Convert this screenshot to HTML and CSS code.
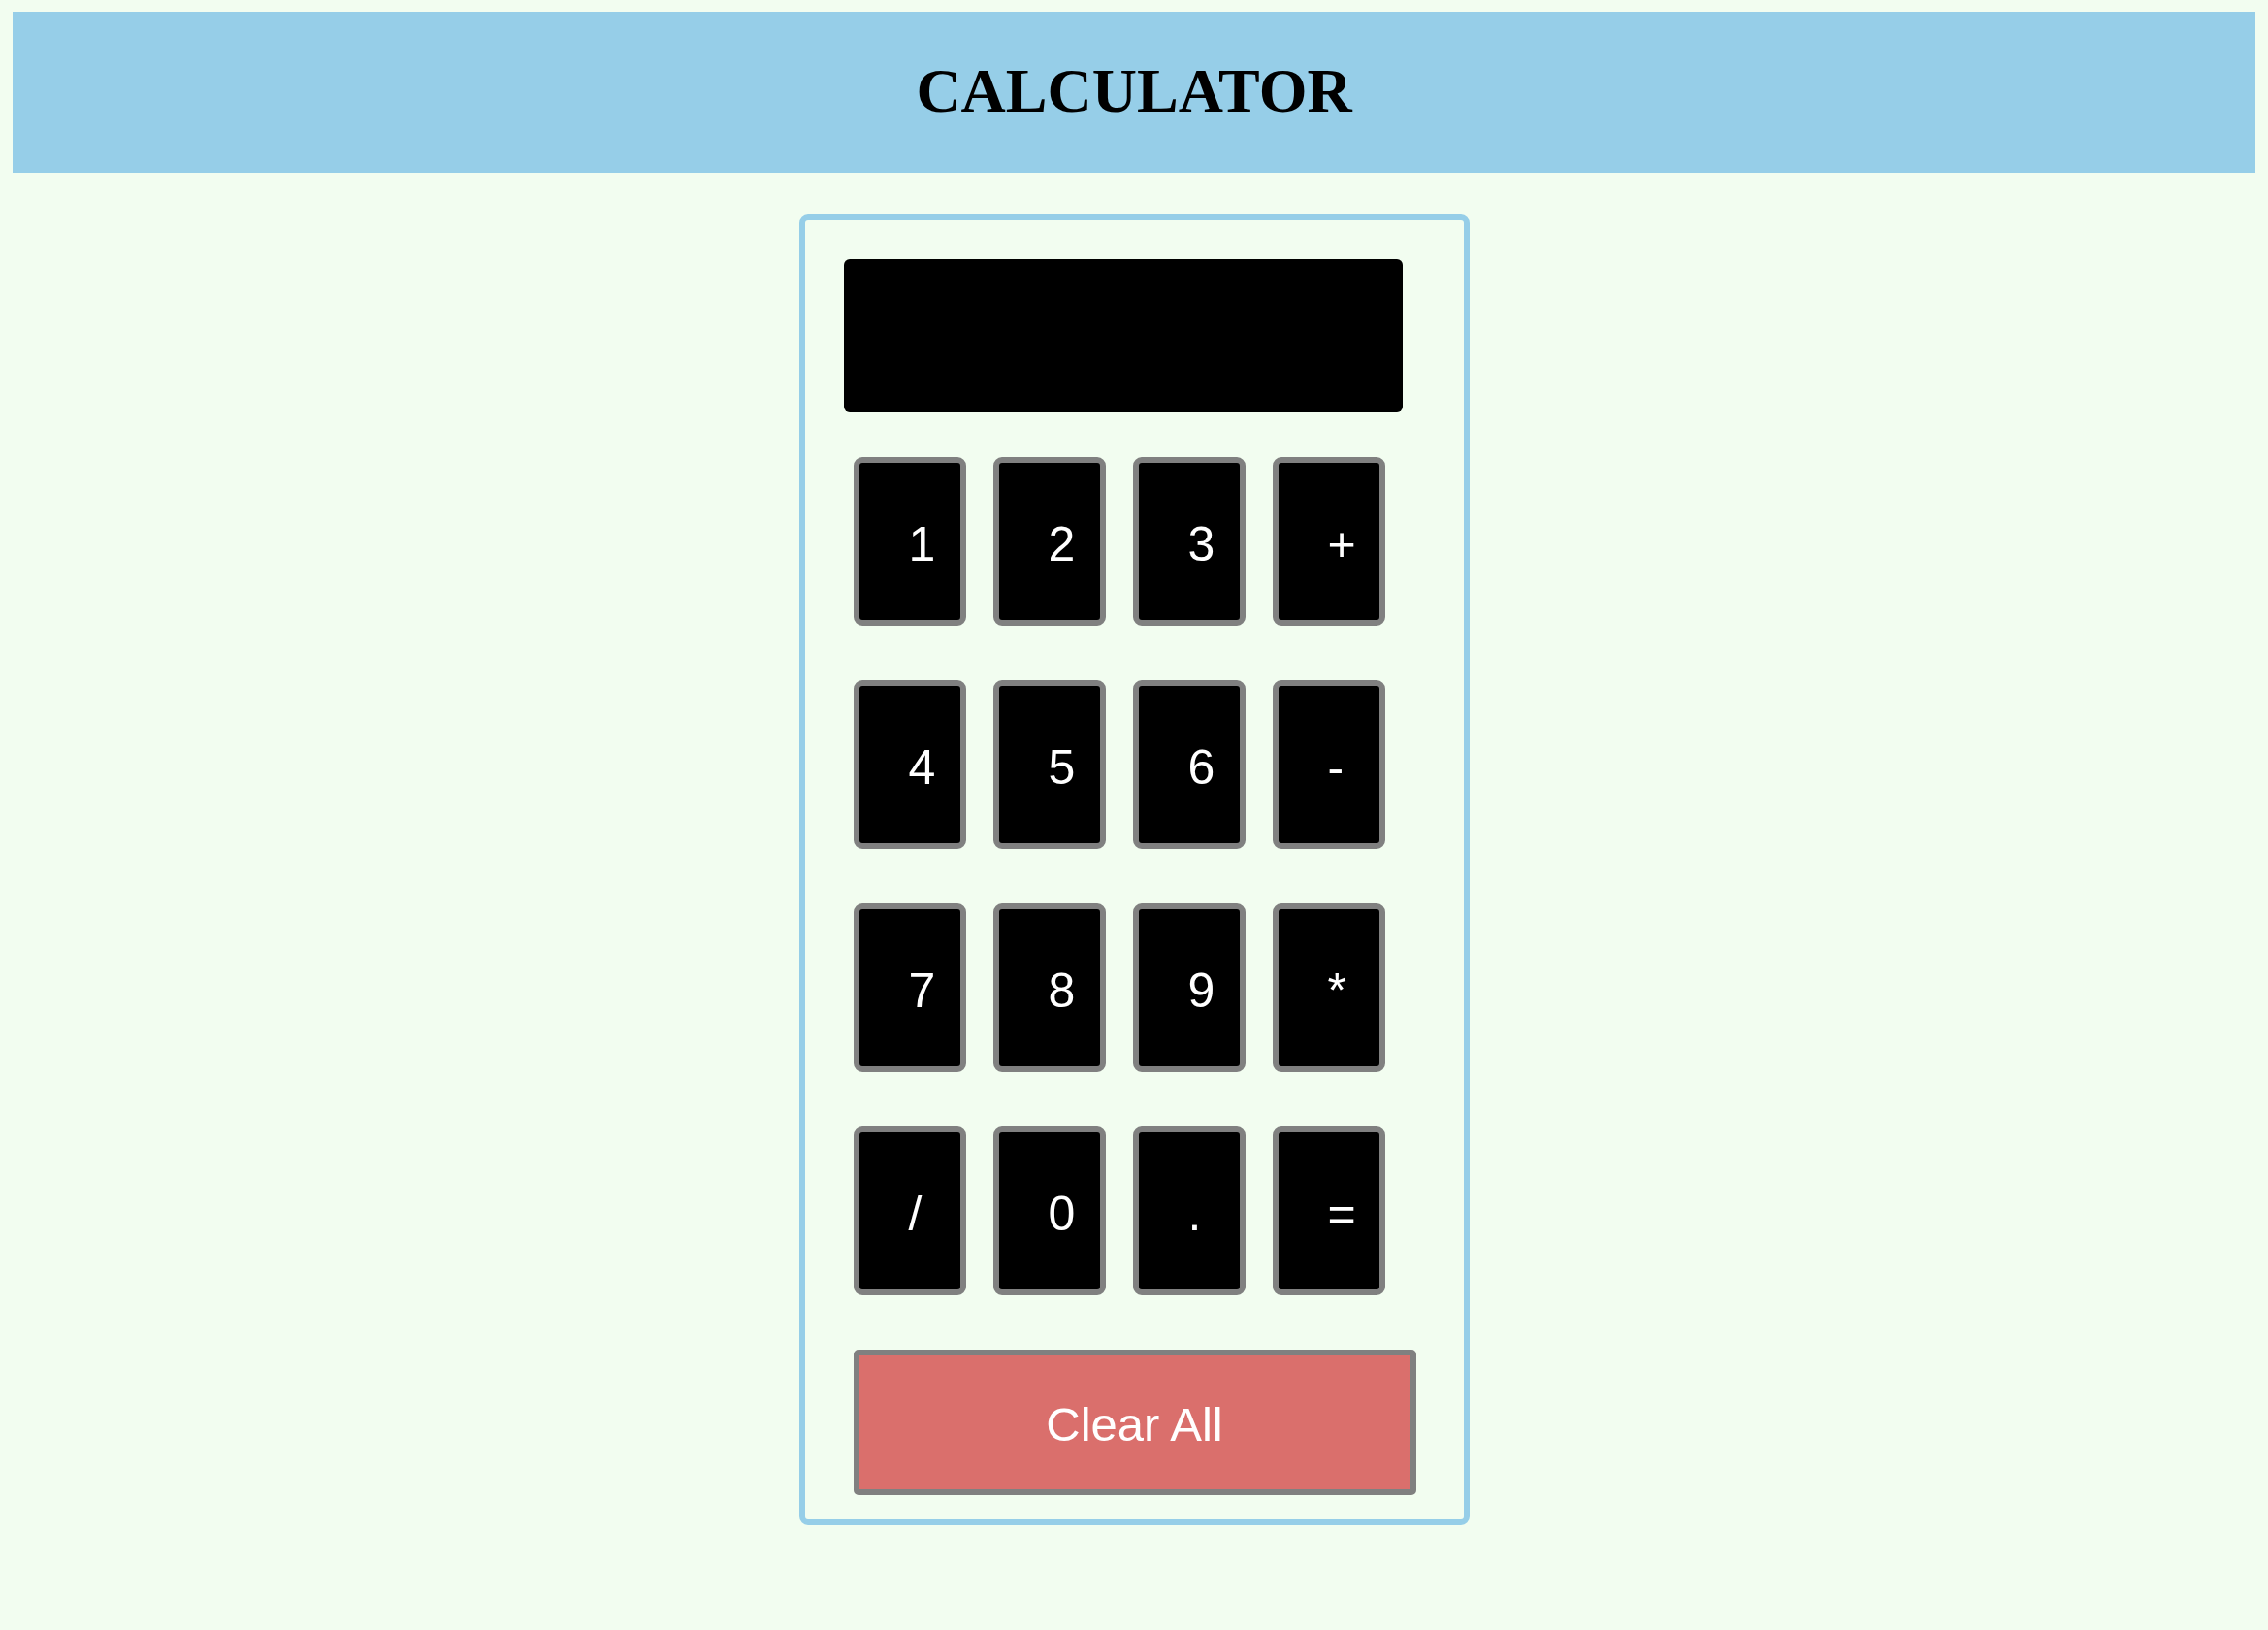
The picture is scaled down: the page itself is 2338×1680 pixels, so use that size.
FILE: index.html
```html
<!DOCTYPE html>
<html lang="en">
<head>
<meta charset="utf-8">
<title>Calculator</title>
<link rel="stylesheet" href="styles.css">
</head>
<body>
<header class="top-bar">
  <h1 class="title">CALCULATOR</h1>
</header>
<main class="calculator">
  <div class="display"></div>
  <div class="keypad">
    <button class="key">1</button>
    <button class="key">2</button>
    <button class="key">3</button>
    <button class="key">+</button>
    <button class="key">4</button>
    <button class="key">5</button>
    <button class="key">6</button>
    <button class="key">-</button>
    <button class="key">7</button>
    <button class="key">8</button>
    <button class="key">9</button>
    <button class="key">*</button>
    <button class="key">/</button>
    <button class="key">0</button>
    <button class="key">.</button>
    <button class="key">=</button>
  </div>
  <button class="clear">Clear All</button>
</main>
</body>
</html>
```
FILE: styles.css
```css
html, body {
  background: #f2fdf0;
}
body {
  margin: 12px;
  font-family: "Liberation Sans", Arial, sans-serif;
}
.top-bar {
  background: #96cee8;
  height: 166px;
  margin: 0 1px;
}
.title {
  margin: 0;
  line-height: 164px;
  text-align: center;
  font-family: "Liberation Serif", "Times New Roman", serif;
  font-weight: bold;
  font-size: 64px;
  color: #000;
}
.calculator {
  box-sizing: border-box;
  width: 691px;
  margin: 43px auto 0;
  border: 6px solid #96cee8;
  border-radius: 9px;
  padding: 40px 0 25px 0;
}
.display {
  margin-left: 40px;
  width: 576px;
  height: 158px;
  background: #000;
  border-radius: 6px;
}
.keypad {
  margin: 46px 0 0 50px;
  display: grid;
  grid-template-columns: repeat(4, 116px);
  grid-auto-rows: 174px;
  column-gap: 28px;
  row-gap: 56px;
}
.key {
  box-sizing: border-box;
  margin: 0;
  background: #000;
  color: #fff;
  border: 6px solid #808080;
  border-radius: 9px;
  padding: 5px 0 0 51px;
  text-align: left;
  font-family: "Liberation Sans", Arial, sans-serif;
  font-size: 50px;
  line-height: 1;
}
.clear {
  display: block;
  box-sizing: border-box;
  margin: 56px 0 0 50px;
  width: 580px;
  height: 150px;
  background: #da6f6c;
  color: #fff;
  border: 6px solid #808080;
  border-radius: 5px;
  padding: 4px 0 0 0;
  font-family: "Liberation Sans", Arial, sans-serif;
  font-size: 49px;
  text-align: center;
}
```
